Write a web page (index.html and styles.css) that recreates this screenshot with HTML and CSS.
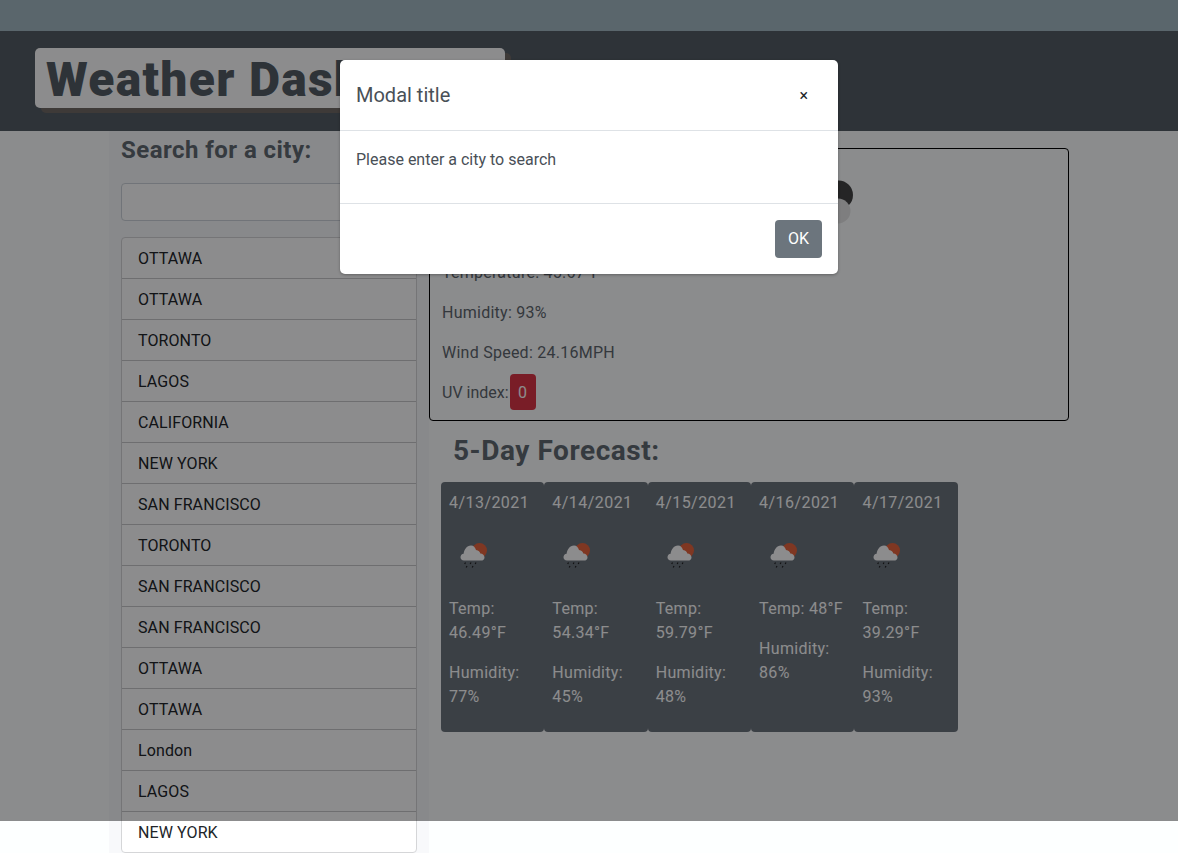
FILE: index.html
```html
<!doctype html>
<html>
<head>
<meta charset="utf-8">
<title>Weather Dashboard</title>
<link rel="stylesheet" href="styles.css">
</head>
<body>

<svg class="defs" width="0" height="0">
	<symbol id="rain" viewBox="0 0 50 50">
		<circle cx="30.500" cy="22.500" r="7.500" fill="#e8643c"/>
		<path d="M15 32.500c-2.200 0-3.500-1.500-3.500-3.300s1.300-3.200 3.100-3.400c.5-4 3-8.300 7.400-8.300 2.600 0 4.200 1.800 5 4.500 2.800.6 3.800 1.700 4.300 3.600 2.500.1 4.200 1.800 4.200 3.800 0 2-1.500 3.100-3.500 3.100z" fill="#fff"/>
		<path d="M16.500 34.500l-.8 1.500M22 34.500l-.8 1.500M27 34.500l-.8 1.500M18 38l-.8 1.500M24 38l-.8 1.500" stroke="#222" stroke-width="1.200" fill="none"/>
	</symbol>
</svg>

<div class="topband"></div>

<header class="header">
	<h1 class="brand">Weather Dashboard</h1>
</header>

<div class="container">
	<aside class="side">
		<h4 class="side-title">Search for a city:</h4>
		<input class="city-input" type="text">
		<ul class="city-list">
			<li>OTTAWA</li>
			<li>OTTAWA</li>
			<li>TORONTO</li>
			<li>LAGOS</li>
			<li>CALIFORNIA</li>
			<li>NEW YORK</li>
			<li>SAN FRANCISCO</li>
			<li>TORONTO</li>
			<li>SAN FRANCISCO</li>
			<li>SAN FRANCISCO</li>
			<li>OTTAWA</li>
			<li>OTTAWA</li>
			<li>London</li>
			<li>LAGOS</li>
			<li>NEW YORK</li>
		</ul>
	</aside>

	<main class="main">
		<section class="today">
			<div class="today-head">
				<h2 class="today-title">OTTAWA (4/12/2021)</h2>
				<svg class="today-icon" viewBox="0 0 80 80">
					<circle cx="58.500" cy="34" r="14.500" fill="#444"/>
					<circle cx="58" cy="50" r="12.500" fill="#e6e6e6"/>
				</svg>
			</div>
			<p>Temperature: 45.67°F</p>
			<p>Humidity: 93%</p>
			<p>Wind Speed: 24.16MPH</p>
			<p class="uv"><span class="uv-label">UV index:</span><span class="uv-badge">0</span></p>
		</section>

		<h3 class="forecast-title">5-Day Forecast:</h3>
		<div class="forecast">
			<div class="day">
				<p class="date">4/13/2021</p>
				<svg class="day-icon"><use href="#rain"/></svg>
				<p>Temp: 46.49°F</p>
				<p>Humidity: 77%</p>
			</div>
			<div class="day">
				<p class="date">4/14/2021</p>
				<svg class="day-icon"><use href="#rain"/></svg>
				<p>Temp: 54.34°F</p>
				<p>Humidity: 45%</p>
			</div>
			<div class="day">
				<p class="date">4/15/2021</p>
				<svg class="day-icon"><use href="#rain"/></svg>
				<p>Temp: 59.79°F</p>
				<p>Humidity: 48%</p>
			</div>
			<div class="day">
				<p class="date">4/16/2021</p>
				<svg class="day-icon"><use href="#rain"/></svg>
				<p>Temp: 48°F</p>
				<p>Humidity: 86%</p>
			</div>
			<div class="day">
				<p class="date">4/17/2021</p>
				<svg class="day-icon"><use href="#rain"/></svg>
				<p>Temp: 39.29°F</p>
				<p>Humidity: 93%</p>
			</div>
		</div>
	</main>
</div>

<div class="backdrop"></div>

<div class="modal">
	<div class="modal-head">
		<h5 class="modal-title">Modal title</h5>
		<span class="modal-close">×</span>
	</div>
	<div class="modal-body">Please enter a city to search</div>
	<div class="modal-foot">
		<button class="btn-ok" type="button">OK</button>
	</div>
</div>

</body>
</html>
```

FILE: styles.css
```css
*{ box-sizing:border-box; margin:0; padding:0; list-style:none; }
html,body{ height:853px; overflow:hidden; }
body{ position:relative; background:#fdffff; color:#5f676e; font:16px/24px Roboto,"Noto Sans",sans-serif; }
.defs{ display:block; height:0; }

.topband{ height:31px; background:#a5bbc3; }
.header{ height:100px; padding:17px 35px 0; background:#555d64; }
.brand{ width:470px; height:60px; padding:2px 0 0 11px; background:#fff; border-radius:5px; box-shadow:6px 5px 0 #716a65; color:#555d64; font-size:48px; line-height:60px; font-weight:900; letter-spacing:1.300px; white-space:nowrap; overflow:hidden; }

.container{ display:flex; width:960px; margin:0 auto; }
.side{ width:320px; height:722px; padding:0 12px; background:#f8f9fb; }
.side-title{ height:52px; padding-top:1px; font-size:24px; line-height:36px; font-weight:700; letter-spacing:.45px; color:#626a71; }
.city-input{ display:block; width:100%; height:38px; margin-bottom:16px; background:#fff; border:1px solid #ced4da; border-radius:4px; }
.city-list{ border:1px solid #d5d6d8; border-radius:4px; background:#fff; color:#212529; letter-spacing:.1px; }
.city-list li{ height:40px; padding:9px 16px 7px; line-height:24px; }
.city-list li+li{ height:41px; border-top:1px solid #c8c9cb; }

.main{ width:640px; padding-top:17px; }
.today{ height:273px; padding:12px; border:1px solid #000; border-radius:4px; }
.today-head{ display:flex; height:99px; }
.today-title{ width:338px; font-size:32px; line-height:48px; white-space:nowrap; overflow:hidden; }
.today-icon{ width:80px; height:80px; }
.today p{ padding-top:1px; margin-bottom:15px; letter-spacing:.25px; }
.today p.uv{ display:flex; align-items:center; padding-top:0; margin:-6px 0 0; letter-spacing:0; }
.uv-label{ padding-top:2px; }
.uv-badge{ height:36px; padding:7px 8.500px 5px; margin-left:1px; background:#dc3545; border-radius:4px; color:#fff; }

.forecast-title{ height:61px; padding:13px 24px 0; font-size:28px; line-height:34px; font-weight:700; letter-spacing:.55px; color:#626a71; }
.forecast{ display:flex; width:516.800px; height:250px; margin-left:12px; }
.day{ flex:1; padding:8px; background:#6c757d; border-radius:4px; color:#fff; letter-spacing:.3px; }
.day p{ padding-top:1px; margin-bottom:15px; }
.day p.date{ margin-bottom:0; letter-spacing:.45px; }
.day-icon{ display:block; width:50px; height:50px; margin:13px 0 18px; }

.backdrop{ position:absolute; left:0; top:0; width:100%; height:821px; background:#000002; opacity:.45; }

.modal{ position:absolute; left:340px; top:60px; width:498px; background:#fff; border-radius:5px; color:#495057; box-shadow:0 1px 3px rgba(0,0,0,.3); }
.modal-head{ display:flex; justify-content:space-between; align-items:center; height:71px; padding:0 30px 0 16px; border-bottom:1px solid #dee2e6; }
.modal-title{ font-size:20px; line-height:30px; font-weight:400; }
.modal-close{ padding-top:1px; color:#212529; font-size:16px; }
.modal-body{ height:73px; padding:17px 16px 0; border-bottom:1px solid #dee2e6; }
.modal-foot{ display:flex; justify-content:flex-end; height:70px; padding:16px; }
.btn-ok{ width:47px; height:38px; background:#6c757d; border:0; border-radius:4px; color:#fff; font:16px/24px Roboto,"Noto Sans",sans-serif; }
```
